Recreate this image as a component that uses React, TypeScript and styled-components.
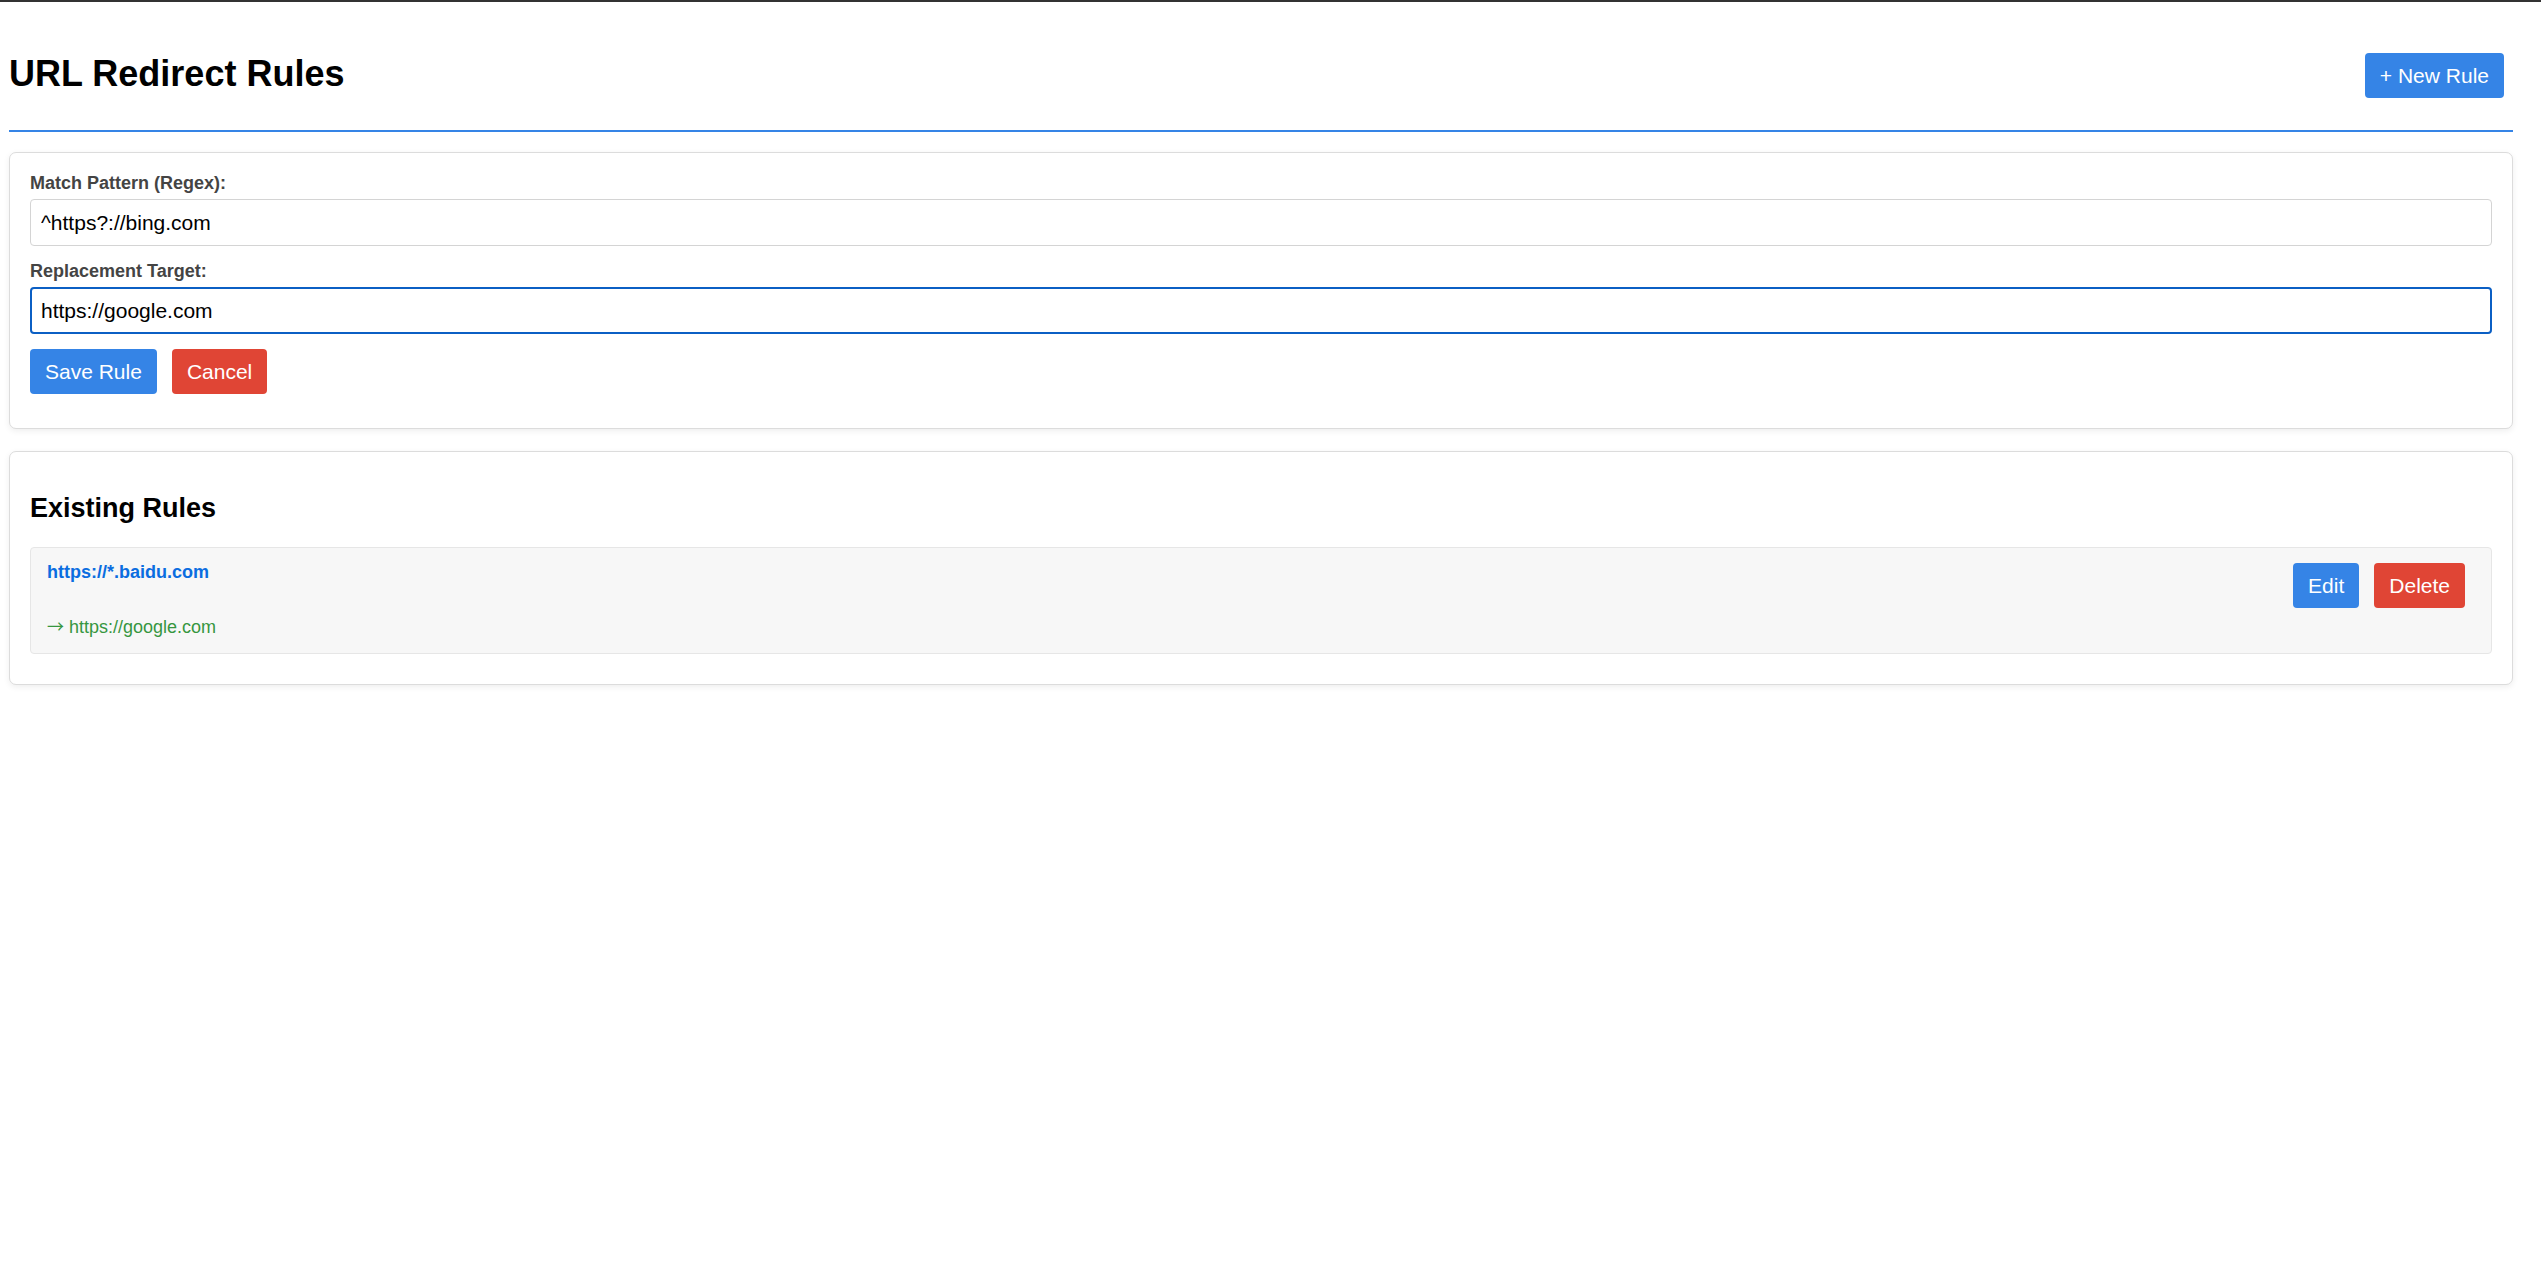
import React, { useState } from "react";
import styled, { createGlobalStyle, css } from "styled-components";

const GlobalStyle = createGlobalStyle`
  html, body {
    margin: 0;
    padding: 0;
    background: #ffffff;
  }
  body {
    border-top: 2px solid #333333;
    font-family: "Liberation Sans", Arial, Helvetica, sans-serif;
    color: #000000;
  }
  * {
    box-sizing: border-box;
  }
`;

const Page = styled.div`
  padding: 0 28px 40px 9px;
`;

const Header = styled.header`
  display: flex;
  justify-content: space-between;
  align-items: flex-start;
  padding: 51px 9px 32px 0;
  border-bottom: 2px solid #3584e6;
`;

const Title = styled.h1`
  margin: 0;
  font-size: 36px;
  font-weight: 700;
  line-height: normal;
  color: #000000;
`;

type Variant = "primary" | "danger";

const Button = styled.button<{ $variant?: Variant }>`
  height: 45px;
  padding: 0 15px;
  border: none;
  border-radius: 4px;
  font-family: "Liberation Sans", Arial, Helvetica, sans-serif;
  font-size: 21px;
  color: #ffffff;
  cursor: pointer;
  white-space: nowrap;
  ${({ $variant }) =>
    $variant === "danger"
      ? css`
          background: #e04535;
        `
      : css`
          background: #3584e6;
        `}
`;

const Card = styled.section<{ $gap?: number }>`
  margin-top: ${({ $gap }) => $gap ?? 20}px;
  padding: 20px;
  background: #ffffff;
  border: 1px solid #dcdcdc;
  border-radius: 7px;
  box-shadow: 0 2px 6px rgba(0, 0, 0, 0.07);
`;

const FormGroup = styled.div`
  margin-bottom: 15px;
`;

const Label = styled.label`
  display: block;
  margin-bottom: 6px;
  font-size: 18px;
  line-height: 20px;
  font-weight: 700;
  color: #444444;
`;

const Input = styled.input<{ $focused?: boolean }>`
  display: block;
  width: 100%;
  height: 47px;
  margin: 0;
  font-family: "Liberation Sans", Arial, Helvetica, sans-serif;
  font-size: 21px;
  color: #000000;
  background: #ffffff;
  border-radius: 4px;
  outline: none;
  ${({ $focused }) =>
    $focused
      ? css`
          border: 2px solid #0b5fc4;
          padding: 0 9px;
        `
      : css`
          border: 1px solid #d4d4d4;
          padding: 0 10px;
        `}
`;

const ButtonRow = styled.div`
  display: flex;
  gap: 15px;
  margin-bottom: 14px;
`;

const SectionTitle = styled.h2`
  margin: 21px 0 23px;
  font-size: 27px;
  font-weight: 700;
  line-height: 31px;
  color: #000000;
`;

const RuleList = styled.div`
  display: flex;
  flex-direction: column;
  gap: 10px;
  margin-bottom: 10px;
`;

const RuleItem = styled.div`
  display: flex;
  justify-content: space-between;
  align-items: flex-start;
  padding: 15px 26px 15px 16px;
  background: #f7f7f7;
  border: 1px solid #e6e6e6;
  border-radius: 4px;
`;

const RuleInfo = styled.div`
  display: flex;
  flex-direction: column;
  gap: 34px;
  margin-top: -1px;
`;

const RulePattern = styled.div`
  font-size: 18px;
  font-weight: 700;
  line-height: 21px;
  color: #0b6de0;
`;

const RuleTarget = styled.div`
  height: 21px;
  font-size: 18px;
  line-height: 21px;
  color: #36963f;
  white-space: nowrap;
`;

const Arrow = styled.span`
  font-family: "Noto Sans CJK SC", "DejaVu Sans", sans-serif;
  font-size: 17px;
  line-height: 0;
`;

const RuleActions = styled.div`
  display: flex;
  gap: 15px;
`;

type Rule = { id: number; pattern: string; target: string };

export default function App() {
  const [pattern, setPattern] = useState("^https?://bing.com");
  const [target, setTarget] = useState("https://google.com");
  const rules: Rule[] = [
    { id: 1, pattern: "https://*.baidu.com", target: "https://google.com" },
  ];

  return (
    <>
      <GlobalStyle />
      <Page>
        <Header>
          <Title>URL Redirect Rules</Title>
          <Button $variant="primary">+ New Rule</Button>
        </Header>

        <Card $gap={20}>
          <FormGroup>
            <Label htmlFor="pattern">Match Pattern (Regex):</Label>
            <Input
              id="pattern"
              value={pattern}
              onChange={(e) => setPattern(e.target.value)}
            />
          </FormGroup>
          <FormGroup>
            <Label htmlFor="target">Replacement Target:</Label>
            <Input
              id="target"
              $focused
              value={target}
              onChange={(e) => setTarget(e.target.value)}
            />
          </FormGroup>
          <ButtonRow>
            <Button $variant="primary">Save Rule</Button>
            <Button $variant="danger">Cancel</Button>
          </ButtonRow>
        </Card>

        <Card $gap={22}>
          <SectionTitle>Existing Rules</SectionTitle>
          <RuleList>
            {rules.map((r) => (
              <RuleItem key={r.id}>
                <RuleInfo>
                  <RulePattern>{r.pattern}</RulePattern>
                  <RuleTarget>
                    <Arrow>→</Arrow> {r.target}
                  </RuleTarget>
                </RuleInfo>
                <RuleActions>
                  <Button $variant="primary">Edit</Button>
                  <Button $variant="danger">Delete</Button>
                </RuleActions>
              </RuleItem>
            ))}
          </RuleList>
        </Card>
      </Page>
    </>
  );
}
